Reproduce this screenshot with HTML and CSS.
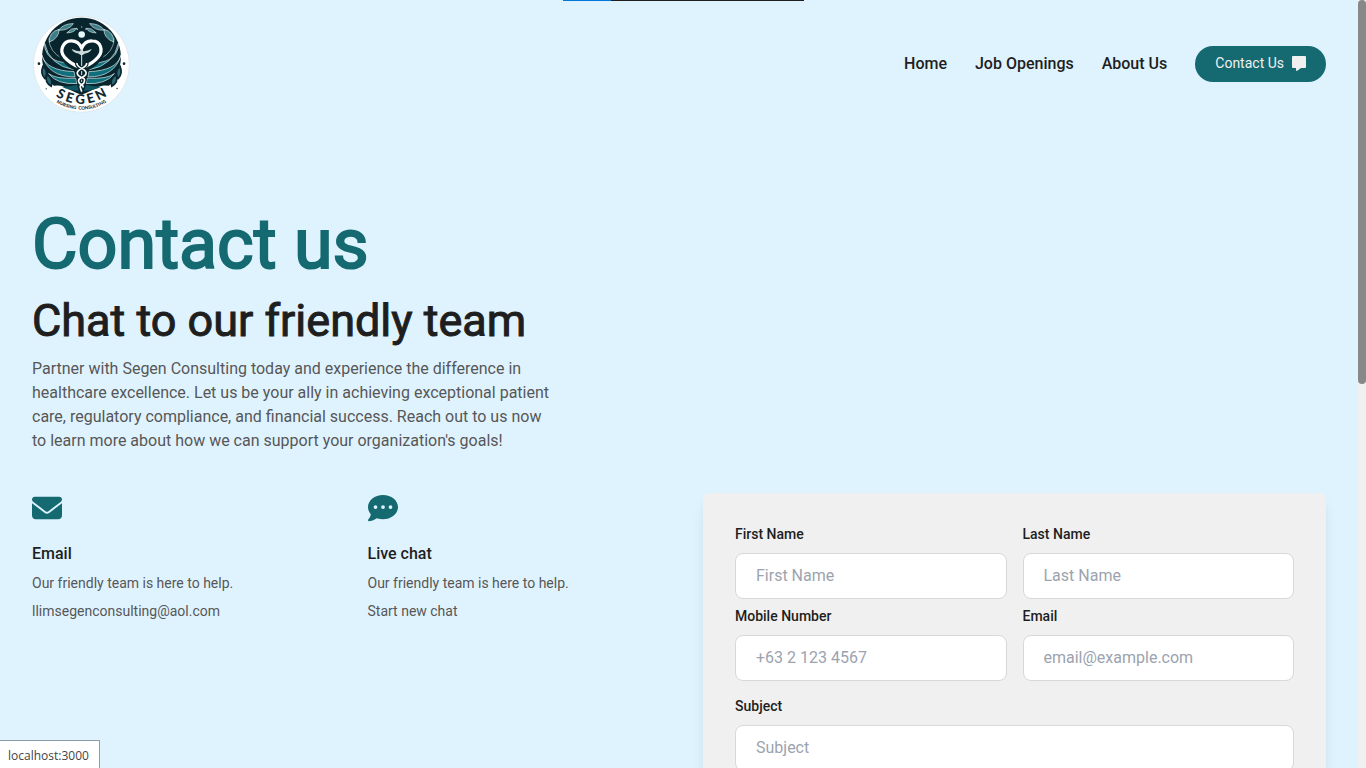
FILE: index.html
```html
<!DOCTYPE html>
<html lang="en">
<head>
<meta charset="utf-8">
<meta name="viewport" content="width=device-width, initial-scale=1">
<title>Segen Consulting - Contact us</title>
<link rel="stylesheet" href="styles.css">
</head>
<body>
<div class="page">
  <header class="header">
    <a class="brand" href="#" aria-label="Segen Nursing Consulting">
      <svg class="logo" viewBox="24 21 296 296" aria-hidden="true">
        <defs>
          <path id="arc-name" d="M80 256Q173 324 266 254"/>
          <path id="arc-tag" d="M80 274Q173 340 266 274"/>
          <g id="wing">
            <path fill="#0f6f7b" stroke="#e4eeee" stroke-width="2" d="M61 103Q62 148 100 160Q125 167 146 170L150 186Q76 174 61 103Z"/>
            <path fill="#0f6f7b" stroke="#e4eeee" stroke-width="2" d="M54 142Q66 189 151 192L154 208Q74 209 54 142Z"/>
            <path fill="#0f6f7b" stroke="#e4eeee" stroke-width="2" d="M74 198Q96 215 156 212L160 228Q100 232 74 198Z"/>
            <path fill="#0f5662" d="M114 238Q138 238 160 232L166 250Q136 250 114 238Z"/>
            <path fill="none" stroke="#bdd2d4" stroke-width="2" d="M75 92Q76 132 116 153"/>
            <path fill="#3d7f89" stroke="#dce9e9" stroke-width="2" d="M76 103Q75 72 106 64Q106 91 76 103ZM104 67Q119 47 149 47Q136 68 104 67ZM129 75Q142 59 160 61Q150 75 129 75Z"/>
            <path fill="#2b6872" stroke="#0b2630" stroke-width="5" d="M57 176Q48 199 63 213Q76 193 57 176ZM69 201Q61 225 82 236Q89 213 69 201Z"/>
          </g>
        </defs>
        <circle cx="173" cy="170" r="145" fill="#fff" stroke="#d5dfe3" stroke-width="2"/>
        <path fill="#08242d" d="M61 187A119 119 0 1 1 286 187Q279 216 256 235Q233 230 208 247Q189 257 173 262Q158 257 138 247Q114 230 90 235Q67 216 61 187Z"/>
        <use href="#wing"/>
        <use href="#wing" transform="translate(347 0) scale(-1 1)"/>
        <path d="M163 180Q139 171 122 151C105 130 118 99 142 99Q164 98 174 121Q184 98 206 99C231 99 241 130 224 151Q208 171 184 180" fill="#08242d" stroke="#08242d" stroke-width="22"/>
        <path d="M166 178Q139 167 122 148C105 128 118 100 142 99Q164 98 174 121Q184 98 206 99C231 99 241 128 224 148Q208 167 181 178" fill="none" stroke="#fff" stroke-width="10"/>
        <circle cx="174" cy="80" r="10" fill="#e6fafa"/>
        <g fill="#b7d0d3"><circle cx="161" cy="64" r="2"/><circle cx="174" cy="57" r="2"/><circle cx="187" cy="64" r="2"/></g>
        <path d="M144 124Q158 131 169 130L174 124L179 130Q190 131 204 124Q200 136 184 137L177 142H171L164 137Q148 136 144 124Z" fill="#c9d9da"/>
        <path d="M174 137V254" stroke="#dce9e9" stroke-width="3"/>
        <path d="M160 166C157 184 193 181 187 199C184 213 161 207 165 222C167 234 181 229 178 240M189 166C191 184 156 181 161 199C164 213 188 207 182 222C180 234 167 229 170 240L174 252" fill="none" stroke="#08242d" stroke-width="12"/>
        <path d="M160 166C157 184 193 181 187 199C184 213 161 207 165 222C167 234 181 229 178 240M189 166C191 184 156 181 161 199C164 213 188 207 182 222C180 234 167 229 170 240L174 252" fill="none" stroke="#fff" stroke-width="5"/>
        <g fill="#0b2630"><circle cx="45" cy="168" r="4"/><circle cx="302" cy="168" r="4"/><circle cx="67" cy="244" r="2"/><circle cx="281" cy="243" r="2"/></g>
        <text class="logo-name"><textPath href="#arc-name" startOffset="50%">S&#160;E&#160;G&#160;E&#160;N</textPath></text>
        <text class="logo-tag"><textPath href="#arc-tag" startOffset="50%">NURSING&#160; CONSULTING</textPath></text>
      </svg>
    </a>
    <nav class="nav" aria-label="Main">
      <a class="nav-link" href="#">Home</a>
      <a class="nav-link" href="#">Job Openings</a>
      <a class="nav-link" href="#">About Us</a>
      <button class="contact-button" type="button">Contact Us
        <svg class="button-icon" viewBox="0 0 16 16" aria-hidden="true"><path fill="currentColor" d="M2 1H14Q15 1 15 2V12Q15 13 14 13H10L6 16Q5 16 5 15V13H2Q1 13 1 12V2Q1 1 2 1Z"/></svg>
      </button>
    </nav>
  </header>

  <main class="main">
    <section class="intro">
      <h1 class="title">Contact us</h1>
      <h2 class="subtitle">Chat to our friendly team</h2>
      <p class="lead">Partner with Segen Consulting today and experience the difference in healthcare excellence. Let us be your ally in achieving exceptional patient care, regulatory compliance, and financial success. Reach out to us now to learn more about how we can support your organization's goals!</p>
    </section>

    <div class="contact-grid">
      <section class="channel">
        <svg class="channel-icon" viewBox="0 0 512 512" aria-hidden="true"><path fill="currentColor" d="M48 64C21.500 64 0 85.500 0 112c0 15.100 7.100 29.300 19.200 38.400L236.800 313.600c11.400 8.500 27 8.500 38.400 0L492.800 150.400c12.100-9.100 19.200-23.300 19.200-38.400c0-26.500-21.500-48-48-48H48zM0 176V384c0 35.300 28.700 64 64 64H448c35.300 0 64-28.700 64-64V176L294.400 339.200c-22.800 17.100-54 17.100-76.800 0L0 176z"/></svg>
        <h3 class="channel-title">Email</h3>
        <p class="channel-text">Our friendly team is here to help.</p>
        <a class="channel-text" href="#">llimsegenconsulting@aol.com</a>
      </section>
      <section class="channel">
        <svg class="channel-icon" viewBox="0 0 512 512" aria-hidden="true"><path fill="currentColor" fill-rule="evenodd" d="M256 448c141.400 0 256-93.100 256-208S397.400 32 256 32S0 125.100 0 240c0 45.100 17.700 86.800 47.700 120.900c-1.900 24.500-11.400 46.300-21.400 62.900c-5.500 9.200-11.100 16.600-15.200 21.600c-2.100 2.500-3.700 4.400-4.900 5.700c-.6 .6-1 1.100-1.300 1.400l-.3 .3c-4.600 4.600-5.900 11.400-3.400 17.400c2.500 6 8.300 9.900 14.800 9.900c28.700 0 57.600-8.900 81.600-19.300c22.900-10 42.400-21.900 54.300-30.600c31.800 11.500 67 17.900 104.100 17.900zM128 208a32 32 0 1 1 0 64 32 32 0 1 1 0-64zm128 0a32 32 0 1 1 0 64 32 32 0 1 1 0-64zm96 32a32 32 0 1 1 64 0 32 32 0 1 1 -64 0z"/></svg>
        <h3 class="channel-title">Live chat</h3>
        <p class="channel-text">Our friendly team is here to help.</p>
        <a class="channel-text" href="#">Start new chat</a>
      </section>
      <form class="form-card">
        <div class="form-pair">
          <div class="field"><label for="first">First Name</label><input id="first" type="text" placeholder="First Name"></div>
          <div class="field"><label for="last">Last Name</label><input id="last" type="text" placeholder="Last Name"></div>
          <div class="field"><label for="mobile">Mobile Number</label><input id="mobile" type="tel" placeholder="+63 2 123 4567"></div>
          <div class="field"><label for="email">Email</label><input id="email" type="email" placeholder="email@example.com"></div>
        </div>
        <div class="field"><label for="subject">Subject</label><input id="subject" type="text" placeholder="Subject"></div>
      </form>
    </div>
  </main>
</div>
<div class="scroll-track" aria-hidden="true"><div class="scroll-thumb"></div></div>
<div class="load-bar" aria-hidden="true"><div class="load-progress"></div></div>
<div class="status">localhost:3000</div>
</body>
</html>
```
FILE: styles.css
```css
* {
  box-sizing: border-box;
}

body {
  margin: 0;
  height: 100vh;
  overflow: hidden;
  background: #dff3ff;
  color: #1e1e1e;
  font-family: Roboto, "Liberation Sans", sans-serif;
  font-size: 16px;
  line-height: 24px;
}

h1, h2, h3, p {
  margin: 0;
}

a {
  color: inherit;
  text-decoration: none;
}

.page {
  margin-right: 8px;
  padding: 0 32px;
}

.header {
  display: flex;
  align-items: center;
  justify-content: space-between;
  height: 128px;
}

.brand {
  display: block;
}

.logo {
  display: block;
  width: 98px;
  height: 98px;
}

.logo-name,
.logo-tag {
  font-family: Lato, sans-serif;
  font-weight: 900;
  text-anchor: middle;
  fill: #142b32;
}

.logo-name {
  font-size: 40px;
}

.logo-tag {
  font-size: 14px;
}

.nav {
  display: flex;
  align-items: center;
  gap: 28px;
}

.nav-link {
  font-weight: 500;
}

.contact-button {
  display: flex;
  align-items: center;
  gap: 7px;
  height: 36px;
  padding: 0 19px 2px 20px;
  border: 0;
  border-radius: 18px;
  background: #156970;
  color: #f0f0f0;
  font: inherit;
  font-size: 14px;
}

.button-icon {
  width: 16px;
  height: 16px;
}

.main {
  padding-top: 80px;
}

.title {
  margin-bottom: 17px;
  color: #156970;
  font-size: 70px;
  font-weight: 400;
  line-height: 72px;
  -webkit-text-stroke: 2px currentColor;
}

.subtitle {
  margin-bottom: 12px;
  font-size: 45px;
  font-weight: 400;
  line-height: 48px;
  -webkit-text-stroke: 1px currentColor;
}

.lead {
  max-width: 520px;
  color: #575757;
}

.contact-grid {
  display: grid;
  grid-template-columns: repeat(4, 1fr);
  gap: 48px;
  margin-top: 40px;
}

.channel {
  display: flex;
  flex-direction: column;
  align-items: flex-start;
  gap: 7px;
}

.channel-icon {
  width: 30px;
  height: 30px;
  margin-bottom: 12px;
  color: #156970;
}

.channel-title {
  font-size: 16px;
  font-weight: 500;
}

.channel-text {
  color: #575757;
  font-size: 14px;
  line-height: 21px;
}

.form-card {
  grid-column: span 2;
  display: grid;
  gap: 16px;
  padding: 32px;
  border-radius: 6px;
  background: #f0f0f0;
  box-shadow: 0 10px 15px -3px rgba(0, 0, 0, 0.1), 0 4px 6px -4px rgba(0, 0, 0, 0.1);
}

.form-pair {
  display: grid;
  grid-template-columns: 1fr 1fr;
  gap: 8px 16px;
}

.field {
  display: grid;
  gap: 10px;
}

.field label {
  font-size: 14px;
  font-weight: 500;
  line-height: 18px;
}

.field input {
  width: 100%;
  height: 46px;
  padding: 0 20px 2px;
  border: 1px solid #d8d8d8;
  border-radius: 8px;
  background: #fff;
  color: #1e1e1e;
  font: inherit;
}

.field input::placeholder {
  color: #9ca3af;
}

.scroll-track {
  position: fixed;
  top: 0;
  right: 0;
  bottom: 0;
  width: 8px;
  background: #f0f0f0;
}

.scroll-thumb {
  height: 50%;
  border-radius: 4px;
  background: #888;
}

.load-bar {
  position: fixed;
  top: 0;
  left: 50%;
  width: 241px;
  height: 1px;
  margin-left: -120px;
  background: #1e1e1e;
}

.load-progress {
  width: 20%;
  height: 1px;
  background: #0078d7;
}

.status {
  position: fixed;
  left: 0;
  bottom: 0;
  padding: 6px 10px 4px 8px;
  border-top: 1px solid #8b9cab;
  border-right: 1px solid #8b9cab;
  background: #fff;
  color: #444;
  font-family: "Open Sans", "Noto Sans", sans-serif;
  font-size: 12px;
  line-height: 17px;
}
```
